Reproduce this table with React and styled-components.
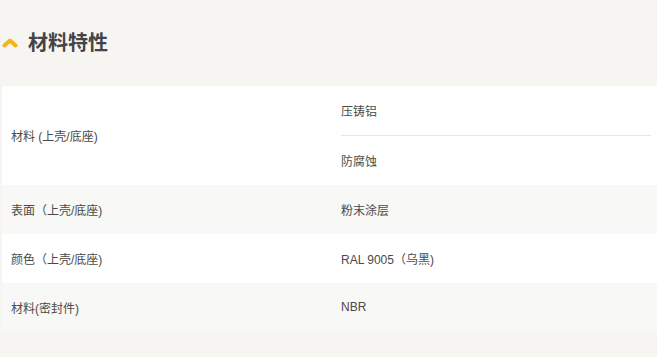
import styled, { createGlobalStyle } from "styled-components";

const Global = createGlobalStyle`
  html, body {
    margin: 0;
    padding: 0;
    background: #f6f5f1;
    font-family: "Liberation Sans", "Noto Sans CJK SC", sans-serif;
  }
`;

const Page = styled.div`
  width: 657px;
  height: 357px;
  overflow: hidden;
`;

const Heading = styled.div`
  display: flex;
  align-items: center;
  gap: 10px;
  padding: 29px 0 0 2px;
  height: 26px;
  margin-bottom: 31px;
`;

const Title = styled.h2`
  margin: 0;
  font-size: 20px;
  line-height: 26px;
  font-weight: 700;
  color: #444446;
  font-family: "Noto Sans CJK SC", sans-serif;
`;

const Table = styled.div`
  margin-left: 2px;
  display: grid;
  grid-template-columns: 339px 1fr;
`;

const Row = styled.div`
  display: contents;
  > * {
    background: ${(p) => (p.$alt ? "#f8f8f6" : "#ffffff")};
  }
`;

const Label = styled.div`
  display: flex;
  align-items: center;
  padding-left: 9px;
  padding-bottom: 1px;
  font-size: 12px;
  color: #4a4a4a;
`;

const Values = styled.div`
  display: flex;
  flex-direction: column;
  padding-right: 6px;
`;

const Value = styled.div`
  height: 49px;
  display: flex;
  align-items: center;
  padding-bottom: 1px;
  box-sizing: border-box;
  font-size: 12px;
  color: #4a4a4a;
  & + & {
    border-top: 1px solid #e6e6e6;
    height: 50px;
  }
`;

const Chevron = () => (
  <svg width="16" height="11" viewBox="0 0 16 11">
    <polyline
      points="2.5,8.5 8,3.5 13.5,8.5"
      fill="none"
      stroke="#f7b418"
      strokeWidth="4"
      strokeLinecap="round"
      strokeLinejoin="round"
    />
  </svg>
);

const rows = [
  { label: "材料 (上壳/底座)", values: ["压铸铝", "防腐蚀"] },
  { label: "表面（上壳/底座)", values: ["粉末涂层"] },
  { label: "颜色（上壳/底座)", values: ["RAL 9005（乌黑)"] },
  { label: "材料(密封件)", values: ["NBR"] },
];

export default function App() {
  return (
    <Page>
      <Global />
      <Heading>
        <Chevron />
        <Title>材料特性</Title>
      </Heading>
      <Table>
        {rows.map((r, i) => (
          <Row key={r.label} $alt={i % 2 === 1}>
            <Label>{r.label}</Label>
            <Values>
              {r.values.map((v) => (
                <Value key={v}>{v}</Value>
              ))}
            </Values>
          </Row>
        ))}
      </Table>
    </Page>
  );
}
